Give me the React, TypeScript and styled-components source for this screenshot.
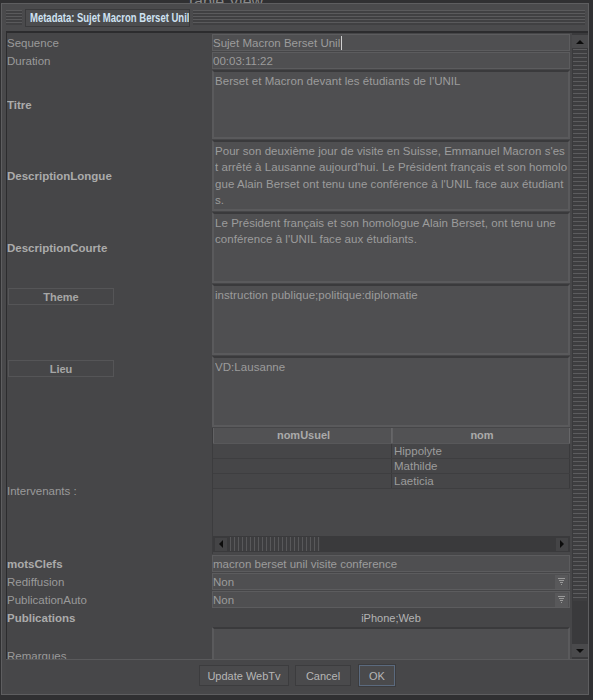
import styled, { createGlobalStyle } from "styled-components";

const GlobalStyle = createGlobalStyle`
	html, body {
		margin: 0;
		padding: 0;
		background: #2f2f31;
	}
	body {
		font-family: "Liberation Sans", Arial, sans-serif;
		font-size: 12px;
	}
`;

const Page = styled.div`
	width: 593px;
	height: 700px;
	overflow: hidden;
	background: #303032;
`;

const Behind = styled.div`
	height: 3px;
	overflow: hidden;
	padding-left: 186px;
	color: #8a8a8a;
	font-size: 16px;
	line-height: 4px;
`;

const Dialog = styled.div`
	width: 588px;
	height: 692px;
	margin-left: 1px;
	background: #48484a;
	border: 1px solid #5e5e60;
	box-sizing: border-box;
	display: flex;
	flex-direction: column;
`;

const TitleBar = styled.div`
	height: 27px;
	display: flex;
	align-items: center;
	padding: 0 3px 0 4px;
	gap: 3px;
	background: #4a4a4c;
`;

const Grip = styled.div<{ $grow?: boolean }>`
	height: 15px;
	width: ${(p) => (p.$grow ? "auto" : "16px")};
	flex: ${(p) => (p.$grow ? 1 : "none")};
	background: repeating-linear-gradient(
		to bottom,
		#5a5a5c 0px,
		#5a5a5c 1px,
		#404042 1px,
		#404042 3px
	);
`;

const TitleBox = styled.div`
	height: 18px;
	width: 165px;
	box-sizing: border-box;
	display: flex;
	align-items: center;
	padding: 0 4px;
	border: 1px solid #3a3a3c;
	background: #4c4c4e;
	white-space: nowrap;
	overflow: hidden;
`;

const TitleText = styled.span`
	display: inline-block;
	color: #cfe2f2;
	font-weight: bold;
	font-size: 12.5px;
	transform: scaleX(0.76);
	transform-origin: left center;
`;

const Body = styled.div`
	flex: 1;
	display: flex;
	margin: 0 0 0 4px;
	border-top: 2px solid #2c2c2e;
	border-left: 1px solid #2c2c2e;
	overflow: hidden;
	background: #464648;
`;

const Form = styled.div`
	flex: 1;
	overflow: hidden;
	padding-top: 1px;
	display: flex;
	flex-direction: column;
`;

const Row = styled.div<{ $h: number }>`
	display: grid;
	grid-template-columns: 205px 358px;
	height: ${(p) => p.$h}px;
	flex: none;
	margin-bottom: 1px;
`;

const Label = styled.div<{ $bold?: boolean; $align?: string }>`
	display: flex;
	align-items: ${(p) => p.$align || "center"};
	color: ${(p) => (p.$bold ? "#ababab" : "#9a9a9a")};
	font-weight: ${(p) => (p.$bold ? "bold" : "normal")};
	font-size: 11.5px;
	white-space: nowrap;
`;

const LateLabel = styled(Label)`
	padding-top: 23px;
`;

const LabelButton = styled.div`
	margin: 4px 0 0 1px;
	width: 106px;
	height: 17px;
	box-sizing: border-box;
	border: 1px solid #555557;
	display: flex;
	align-items: center;
	justify-content: center;
	color: #a6a6a6;
	font-weight: bold;
	font-size: 11px;
`;

const Field = styled.div`
	background: #4f4f51;
	border: 1px solid #5c5c5e;
	box-sizing: border-box;
	color: #9c9c9c;
	font-size: 11.5px;
	display: flex;
	align-items: center;
	white-space: nowrap;
	overflow: hidden;
`;

const Caret = styled.span`
	display: inline-block;
	width: 1px;
	height: 14px;
	background: #d0d0d0;
	margin-left: 1px;
`;

const TextArea = styled.div`
	background: #4f4f51;
	border: 2px solid #5a5a5c;
	border-top-color: #3a3a3c;
	box-sizing: border-box;
	color: #9c9c9c;
	font-size: 11.5px;
	line-height: 16.3px;
	padding: 1px 0 0 1px;
	overflow: hidden;
`;

const Line = styled.div`
	white-space: nowrap;
	overflow: hidden;
	letter-spacing: 0.05px;
`;

const Combo = styled(Field)`
	justify-content: space-between;
	padding-right: 1px;
`;

const ComboButton = styled.div`
	width: 13px;
	height: 14px;
	background: #58585a;
	display: flex;
	align-items: center;
	justify-content: center;
`;

const PubValue = styled.div`
	display: flex;
	align-items: center;
	justify-content: center;
	color: #b4b4b4;
	font-size: 11px;
`;

const Table = styled.div`
	display: flex;
	flex-direction: column;
	background: #48484a;
	border-left: 1px solid #3c3c3e;
	padding-bottom: 2px;
`;

const TableRow = styled.div<{ $header?: boolean }>`
	display: grid;
	grid-template-columns: 179px 1fr;
	height: ${(p) => (p.$header ? 15 : 14)}px;
	border-bottom: 1px solid ${(p) => (p.$header ? "#58585a" : "#3e3e40")};
	background: ${(p) => (p.$header ? "#525254" : "#464648")};
`;

const Cell = styled.div<{ $header?: boolean }>`
	border-right: 1px solid ${(p) => (p.$header ? "#666668" : "#3a3a3c")};
	border-left: ${(p) => (p.$header ? "1px solid #626264" : "none")};
	color: ${(p) => (p.$header ? "#aaaaaa" : "#9c9c9c")};
	font-weight: ${(p) => (p.$header ? "bold" : "normal")};
	text-align: ${(p) => (p.$header ? "center" : "left")};
	font-size: ${(p) => (p.$header ? "11px" : "11.5px")};
	line-height: 14px;
	padding-left: 2px;
`;

const TableFill = styled.div`
	flex: 1;
`;

const HScroll = styled.div`
	height: 16px;
	display: flex;
	align-items: center;
	background: #3a3a3c;
	padding: 0 2px;
`;

const ArrowBox = styled.div`
	width: 12px;
	height: 13px;
	background: #444446;
	display: flex;
	align-items: center;
	justify-content: center;
	flex: none;
`;

const HThumb = styled.div`
	margin-left: 3px;
	width: 90px;
	height: 14px;
	background: repeating-linear-gradient(
		to right,
		#58585a 0px,
		#58585a 1px,
		#3e3e40 1px,
		#3e3e40 4px
	);
`;

const Spacer = styled.div`
	flex: 1;
`;

const VScroll = styled.div`
	width: 16px;
	margin-left: 2px;
	display: flex;
	flex-direction: column;
	padding: 2px 0;
	background: #3a3a3c;
`;

const VArrow = styled.div`
	height: 13px;
	display: flex;
	align-items: center;
	justify-content: center;
	background: #4a4a4c;
	flex: none;
`;

const VThumb = styled.div`
	height: 552px;
	margin: 1px 1px;
	flex: none;
	background: repeating-linear-gradient(
		to bottom,
		#5c5c5e 0px,
		#5c5c5e 1px,
		#3e3e40 1px,
		#3e3e40 4px
	);
`;

const Footer = styled.div`
	height: 31px;
	flex: none;
	margin: 0 0 3px 4px;
	border-top: 1px solid #5a5a5c;
	display: flex;
	align-items: center;
	justify-content: center;
	gap: 6px;
	background: #474749;
`;

const Button = styled.div<{ $focus?: boolean; $w: number }>`
	width: ${(p) => p.$w}px;
	height: 21px;
	box-sizing: border-box;
	border: 1px solid ${(p) => (p.$focus ? "#5b6a7e" : "#3c3c3e")};
	outline: ${(p) => (p.$focus ? "1px solid #3c3c3e" : "none")};
	margin-left: ${(p) => (p.$focus ? "2px" : "0")};
	background: #4a4a4c;
	color: #b6b6b6;
	font-size: 11px;
	display: flex;
	align-items: center;
	justify-content: center;
`;

const Tri = ({ dir }: { dir: "up" | "down" | "left" | "right" }) => {
	const pts = {
		up: "0,5 4,1 8,5",
		down: "0,1 8,1 4,5",
		left: "5,0 5,8 1,4",
		right: "1,0 1,8 5,4",
	}[dir];
	const vert = dir === "up" || dir === "down";
	return (
		<svg width={vert ? 8 : 6} height={vert ? 6 : 8}>
			<polygon points={pts} fill="#0c0c0c" />
		</svg>
	);
};

const FilterIcon = () => (
	<svg width="9" height="9" viewBox="0 0 9 9">
		<rect x="1" y="1" width="7" height="1" fill="#9a9a9a" />
		<rect x="2" y="3" width="5" height="1" fill="#9a9a9a" />
		<rect x="3" y="5" width="3" height="1" fill="#9a9a9a" />
		<rect x="4" y="7" width="1" height="1" fill="#9a9a9a" />
	</svg>
);

const intervenants = ["Hippolyte", "Mathilde", "Laeticia"];

function App() {
	return (
		<Page>
			<GlobalStyle />
			<Behind>Table View:</Behind>
			<Dialog>
				<TitleBar>
					<Grip />
					<TitleBox>
						<TitleText>Metadata: Sujet Macron Berset Unil</TitleText>
					</TitleBox>
					<Grip $grow />
				</TitleBar>
				<Body>
					<Form>
						<Row $h={17}>
							<Label>Sequence</Label>
							<Field>
								Sujet Macron Berset Unil
								<Caret />
							</Field>
						</Row>
						<Row $h={17}>
							<Label>Duration</Label>
							<Field>00:03:11:22</Field>
						</Row>
						<Row $h={69}>
							<Label $bold>Titre</Label>
							<TextArea>
								<Line>Berset et Macron devant les étudiants de l'UNIL</Line>
							</TextArea>
						</Row>
						<Row $h={71}>
							<Label $bold>DescriptionLongue</Label>
							<TextArea>
								<Line>Pour son deuxième jour de visite en Suisse, Emmanuel Macron s'es</Line>
								<Line>t arrêté à Lausanne aujourd'hui. Le Président français et son homolo</Line>
								<Line>gue Alain Berset ont tenu une conférence à l'UNIL face aux étudiant</Line>
								<Line>s.</Line>
							</TextArea>
						</Row>
						<Row $h={71}>
							<Label $bold>DescriptionCourte</Label>
							<TextArea>
								<Line>Le Président français et son homologue Alain Berset, ont tenu une</Line>
								<Line>conférence à l'UNIL face aux étudiants.</Line>
							</TextArea>
						</Row>
						<Row $h={71}>
							<Label $align="flex-start">
								<LabelButton>Theme</LabelButton>
							</Label>
							<TextArea>
								<Line>instruction publique;politique:diplomatie</Line>
							</TextArea>
						</Row>
						<Row $h={71}>
							<Label $align="flex-start">
								<LabelButton>Lieu</LabelButton>
							</Label>
							<TextArea>
								<Line>VD:Lausanne</Line>
							</TextArea>
						</Row>
						<Row $h={126}>
							<Label>Intervenants :</Label>
							<Table>
								<TableRow $header>
									<Cell $header>nomUsuel</Cell>
									<Cell $header>nom</Cell>
								</TableRow>
								{intervenants.map((n) => (
									<TableRow key={n}>
										<Cell />
										<Cell>{n}</Cell>
									</TableRow>
								))}
								<TableFill />
								<HScroll>
									<ArrowBox>
										<Tri dir="left" />
									</ArrowBox>
									<HThumb />
									<Spacer />
									<ArrowBox>
										<Tri dir="right" />
									</ArrowBox>
								</HScroll>
							</Table>
						</Row>
						<Row $h={17}>
							<Label $bold>motsClefs</Label>
							<Field>macron berset unil visite conference</Field>
						</Row>
						<Row $h={17}>
							<Label>Rediffusion</Label>
							<Combo>
								Non
								<ComboButton>
									<FilterIcon />
								</ComboButton>
							</Combo>
						</Row>
						<Row $h={17}>
							<Label>PublicationAuto</Label>
							<Combo>
								Non
								<ComboButton>
									<FilterIcon />
								</ComboButton>
							</Combo>
						</Row>
						<Row $h={17}>
							<Label $bold>Publications</Label>
							<PubValue>iPhone;Web</PubValue>
						</Row>
						<Row $h={40}>
							<LateLabel $align="flex-start">Remarques</LateLabel>
							<TextArea />
						</Row>
					</Form>
					<VScroll>
						<VArrow>
							<Tri dir="up" />
						</VArrow>
						<VThumb />
						<Spacer />
						<VArrow>
							<Tri dir="down" />
						</VArrow>
					</VScroll>
				</Body>
				<Footer>
					<Button $w={90}>Update WebTv</Button>
					<Button $w={56}>Cancel</Button>
					<Button $w={36} $focus>
						OK
					</Button>
				</Footer>
			</Dialog>
		</Page>
	);
}

export default App;
